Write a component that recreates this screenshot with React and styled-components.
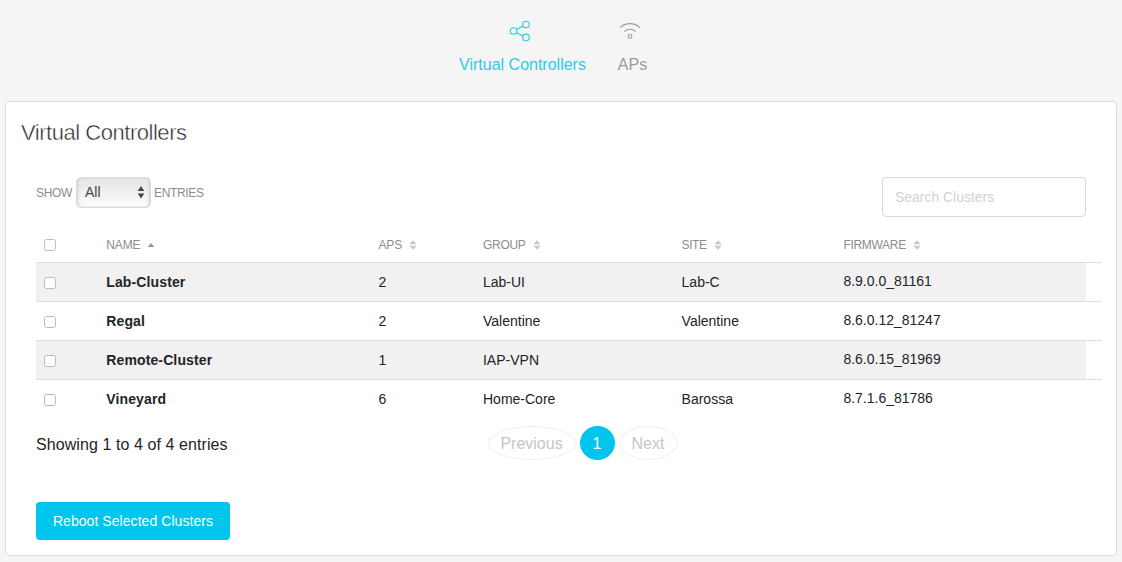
import React from 'react';
import styled, { createGlobalStyle, css } from 'styled-components';

const GlobalStyle = createGlobalStyle`
  *, *::before, *::after { box-sizing: border-box; }
  html, body { margin: 0; height: 562px; overflow: hidden; }
  body {
    background: #f5f5f5;
    color: #212529;
    font-family: "Liberation Sans", Arial, sans-serif;
    font-size: 14px;
  }
  button, input { font-family: inherit; }
`;

const Page = styled.main`
  display: flex;
  flex-direction: column;
  width: 1122px;
  height: 562px;
  padding: 0 5px 6px;
`;

const Tabs = styled.nav`
  display: flex;
  gap: 32px;
  height: 101px;
  padding: 19px 0 0 454px;
`;

const Tab = styled.a`
  display: flex;
  flex-direction: column;
  align-items: center;
  width: ${(p) => p.$width}px;
  color: ${(p) => (p.$active ? '#2acbeb' : '#9b9b9b')};
  font-size: 16px;
  line-height: 20px;
  white-space: nowrap;
  svg { display: block; width: 24px; height: 24px; margin: 0 6px 12px 0; }
`;

const Panel = styled.section`
  width: 1112px;
  height: 455px;
  padding: 16px 15px 0;
  background: #fff;
  border: 1px solid #dcdcdc;
  border-radius: 4px;
`;

const Title = styled.h1`
  margin: 0;
  font-size: 22px;
  font-weight: 300;
  line-height: 30px;
  color: #262626;
  letter-spacing: -0.47px;
  -webkit-text-stroke: 0.45px #fff;
`;

const Content = styled.div`
  padding: 29px 15px 0;
`;

const Toolbar = styled.div`
  display: flex;
  justify-content: space-between;
  align-items: flex-start;
  height: 50px;
`;

const LengthLabel = styled.label`
  display: flex;
  align-items: center;
  height: 31px;
  font-size: 12px;
  color: #8c8c8c;
`;

const LabelText = styled.span`
  width: ${(p) => p.$width}px;
  letter-spacing: -0.35px;
  white-space: nowrap;
`;

const SelectBox = styled.span`
  display: flex;
  align-items: center;
  justify-content: space-between;
  width: 75px;
  height: 31px;
  margin-right: 3px;
  padding: 0 5px 1px 8px;
  border: 1px solid #dadada;
  border-radius: 5px;
  background: linear-gradient(#e4e4e4, #fdfdfd);
  box-shadow: inset 2px 0 3px -1px #d0d0d0, inset -2px 0 3px -1px #d0d0d0;
  color: #444;
  font-size: 14px;
`;

const Search = styled.input`
  width: 204px;
  height: 40px;
  padding: 0 12px;
  border: 1px solid #dadada;
  border-radius: 4px;
  background: #fff;
  outline: none;
  font-size: 14px;
  letter-spacing: -0.03px;
  &::placeholder { color: #d2d2d2; opacity: 1; }
`;

const columns = css`
  display: grid;
  grid-template-columns: 70.3px 272.2px 104.5px 198.6px 161.8px 242.6px;
  align-items: center;
`;

const Table = styled.div`
  width: 1066px;
`;

const HeadRow = styled.div`
  ${columns}
  height: 35px;
  font-size: 12px;
  color: #8c8c8c;
`;

const HeadCell = styled.span`
  display: flex;
  align-items: center;
  gap: 7px;
  letter-spacing: ${(p) => p.$spacing}px;
`;

const Row = styled.div`
  border-top: 1px solid #dcdcdc;
`;

const RowBody = styled.div`
  ${columns}
  width: 1050px;
  height: 38px;
  background: ${(p) => (p.$shaded ? '#f1f1f1' : '#fff')};
`;

const Cell = styled.span`
  font-weight: ${(p) => (p.$bold ? 700 : 400)};
  letter-spacing: ${(p) => (p.$bold ? 0.12 : 0)}px;
  padding-bottom: ${(p) => (p.$raised ? 2 : 0)}px;
`;

const Checkbox = styled.input.attrs({ type: 'checkbox' })`
  appearance: none;
  display: block;
  width: 12px;
  height: 12px;
  margin: 1px 0 0 8px;
  border: 1px solid #bdbdbd;
  border-radius: 2.5px;
  background: #fff;
`;

const Footer = styled.div`
  display: flex;
  height: 34px;
  margin-top: 8px;
  font-size: 16px;
  line-height: 34px;
`;

const Summary = styled.span`
  width: 452px;
  padding-top: 2px;
  letter-spacing: 0.08px;
`;

const Pager = styled.div`
  display: flex;
  gap: 4px;
`;

const PageButton = styled.button`
  width: ${(p) => p.$width}px;
  height: 34px;
  padding: 2px 1px 0 0;
  border: 1px solid ${(p) => (p.$current ? '#00c5ec' : '#efefef')};
  border-radius: 50%;
  background: ${(p) => (p.$current ? '#00c5ec' : '#fff')};
  color: ${(p) => (p.$current ? '#fff' : '#c6c6c6')};
  font-size: 16px;
  line-height: 30px;
`;

const RebootButton = styled.button`
  display: block;
  width: 194px;
  height: 38px;
  margin-top: 42px;
  padding: 0;
  border: 0;
  border-radius: 4px;
  background: #00c5ec;
  color: #fff;
  font-size: 14px;
  letter-spacing: 0.06px;
`;

const ShareIcon = () => (
  <svg viewBox="0 0 24 24" fill="none" stroke="currentColor" strokeWidth="1.1">
    <circle cx="5.6" cy="12" r="3.3" />
    <circle cx="18" cy="5.5" r="3.3" />
    <circle cx="18" cy="18.4" r="3.3" />
    <path d="M8.5 10.4 15.1 7M8.5 13.6l6.6 3.3" />
  </svg>
);

const WifiIcon = () => (
  <svg viewBox="0 0 24 24" fill="none" stroke="currentColor" strokeWidth="1.1">
    <path d="M2.2 8.6C4.7 6 8.1 4.6 12 4.6s7.3 1.4 9.8 4M6.4 12.6c1.4-1.5 3.4-2.3 5.6-2.3s4.2.8 5.6 2.3" />
    <circle cx="12" cy="17.4" r="1.9" />
  </svg>
);

const SelectArrows = () => (
  <svg width="8" height="14" viewBox="0 0 8 14" fill="#444">
    <path d="M4 1 7.3 6H.7zM4 13.5.7 8.5h6.6z" />
  </svg>
);

const SortIcon = ({ active }) => (
  <svg width="8" height="10" viewBox="0 0 8 10" fill={active ? '#9a9a9a' : '#c8c8c8'}>
    {active ? (
      <path d="M4 3 7.5 7H.5z" />
    ) : (
      <path d="M4 .2 7.7 4.3H.3zM4 9.8 .3 5.7h7.4z" />
    )}
  </svg>
);

const headings = [
  { label: 'NAME', active: true, spacing: -0.15 },
  { label: 'APS', spacing: -0.15 },
  { label: 'GROUP', spacing: -0.3 },
  { label: 'SITE', spacing: -0.4 },
  { label: 'FIRMWARE', spacing: -0.3 },
];

const clusters = [
  { name: 'Lab-Cluster', aps: 2, group: 'Lab-UI', site: 'Lab-C', firmware: '8.9.0.0_81161' },
  { name: 'Regal', aps: 2, group: 'Valentine', site: 'Valentine', firmware: '8.6.0.12_81247' },
  { name: 'Remote-Cluster', aps: 1, group: 'IAP-VPN', site: '', firmware: '8.6.0.15_81969' },
  { name: 'Vineyard', aps: 6, group: 'Home-Core', site: 'Barossa', firmware: '8.7.1.6_81786' },
];

export default function App() {
  return (
    <>
      <GlobalStyle />
      <Page>
        <Tabs>
          <Tab $active $width={127}>
            <ShareIcon />
            Virtual Controllers
          </Tab>
          <Tab $width={29}>
            <WifiIcon />
            APs
          </Tab>
        </Tabs>
        <Panel>
          <Title>Virtual Controllers</Title>
          <Content>
            <Toolbar>
              <LengthLabel>
                <LabelText $width={40}>SHOW</LabelText>
                <SelectBox>
                  All
                  <SelectArrows />
                </SelectBox>
                <LabelText $width={50}>ENTRIES</LabelText>
              </LengthLabel>
              <Search placeholder="Search Clusters" />
            </Toolbar>
            <Table>
              <HeadRow>
                <Checkbox />
                {headings.map((h) => (
                  <HeadCell key={h.label} $spacing={h.spacing}>
                    {h.label}
                    <SortIcon active={h.active} />
                  </HeadCell>
                ))}
              </HeadRow>
              {clusters.map((c, i) => (
                <Row key={c.name}>
                  <RowBody $shaded={i % 2 === 0}>
                    <Checkbox />
                    <Cell $bold>{c.name}</Cell>
                    <Cell>{c.aps}</Cell>
                    <Cell>{c.group}</Cell>
                    <Cell>{c.site}</Cell>
                    <Cell $raised>{c.firmware}</Cell>
                  </RowBody>
                </Row>
              ))}
            </Table>
            <Footer>
              <Summary>Showing 1 to 4 of 4 entries</Summary>
              <Pager>
                <PageButton $width={88}>Previous</PageButton>
                <PageButton $width={35} $current>1</PageButton>
                <PageButton $width={59}>Next</PageButton>
              </Pager>
            </Footer>
            <RebootButton>Reboot Selected Clusters</RebootButton>
          </Content>
        </Panel>
      </Page>
    </>
  );
}
